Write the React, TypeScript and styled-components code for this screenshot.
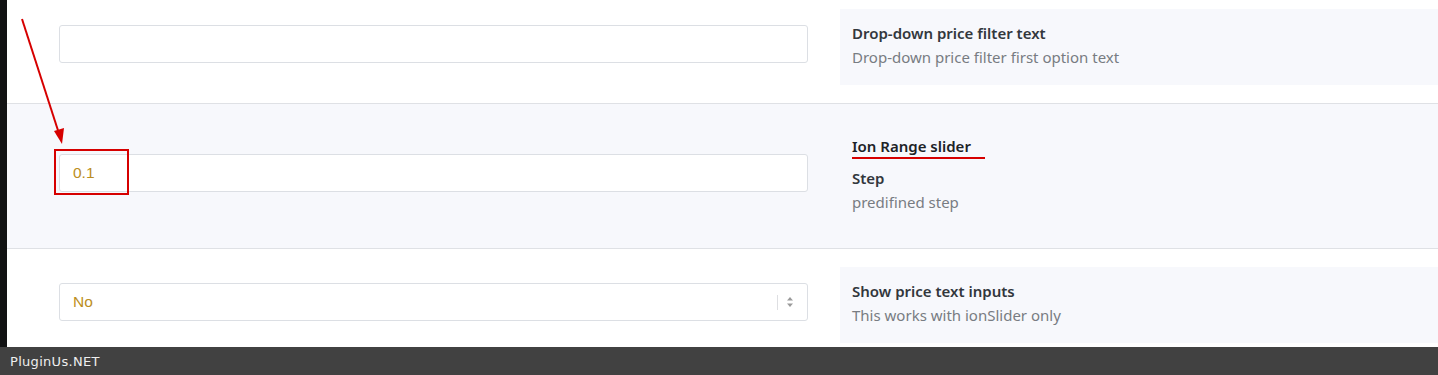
import React from "react";
import styled, { createGlobalStyle } from "styled-components";

const Global = createGlobalStyle`
  html, body { margin: 0; padding: 0; background: #fff; }
  body { font-family: "Noto Sans", "Open Sans", sans-serif; }
  * { box-sizing: border-box; }
`;

const Page = styled.div`
  position: relative;
  width: 1438px;
  height: 375px;
  overflow: hidden;
  display: flex;
  flex-direction: column;
`;

const Body = styled.div`
  flex: 1;
  display: flex;
  min-height: 0;
`;

const Strip = styled.div`
  width: 7px;
  flex: none;
  background: #111213;
`;

const Rows = styled.div`
  flex: 1;
  display: flex;
  flex-direction: column;
`;

const Row = styled.div<{ $h: number; $alt?: boolean; $last?: boolean; $pt: number; $inputTop: number }>`
  height: ${(p) => p.$h}px;
  flex: none;
  display: grid;
  grid-template-columns: 749px 1fr;
  column-gap: 32px;
  align-items: start;
  padding: ${(p) => p.$pt}px 0 0 52px;
  background: ${(p) => (p.$alt ? "#f7f8fc" : "#fff")};
  border-bottom: ${(p) => (p.$last ? "none" : "1px solid #dfe1e5")};
  & > :first-child { margin-top: ${(p) => p.$inputTop}px; }
`;

const Field = styled.div`
  height: 38px;
  border: 1px solid #dcdfe4;
  border-radius: 3px;
  background: #fff;
  display: flex;
  align-items: center;
  padding: 0 13px;
  font-family: "Liberation Sans", Arial, sans-serif;
  font-size: 15.5px;
  color: #bb8e22;
  position: relative;
`;

const SelectArrows = styled.div`
  margin-left: auto;
  display: flex;
  align-items: center;
  gap: 8px;
  height: 100%;
`;

const Divider = styled.span`
  width: 1px;
  height: 15px;
  background: #dedfe2;
`;

const Info = styled.div`
  background: #f7f8fc;
  padding: 14px 12px 18px;
  min-height: 76px;
`;

const Title = styled.div`
  font-size: 15px;
  font-weight: 600;
  color: #32373c;
  line-height: 20px;
  margin-bottom: 4px;
`;

const Section = styled.div`
  position: relative;
  display: inline-block;
  font-size: 15px;
  font-weight: 600;
  color: #1d2327;
  line-height: 20px;
  margin-bottom: 12px;
`;

const Underline = styled.span`
  position: absolute;
  left: 0;
  right: -14px;
  bottom: -3px;
  height: 2px;
  background: #d60000;
`;

const Desc = styled.div`
  font-size: 15px;
  color: #787c82;
  line-height: 20px;
`;

const Footer = styled.div`
  height: 28px;
  flex: none;
  background: #414141;
  display: flex;
  align-items: center;
  padding-left: 10px;
  font-family: "DejaVu Sans", sans-serif;
  font-size: 13px;
  letter-spacing: 0.3px;
  color: #eeeeee;
`;

const Overlay = styled.svg`
  position: absolute;
  left: 0;
  top: 0;
  pointer-events: none;
`;

export default function App() {
  return (
    <Page>
      <Global />
      <Body>
        <Strip />
        <Rows>
          <Row $h={104} $pt={9} $inputTop={16}>
            <Field />
            <Info>
              <Title>Drop-down price filter text</Title>
              <Desc>Drop-down price filter first option text</Desc>
            </Info>
          </Row>
          <Row $h={145} $alt $pt={17} $inputTop={33}>
            <Field>0.1</Field>
            <Info>
              <Section>
                Ion Range slider
                <Underline />
              </Section>
              <Title>Step</Title>
              <Desc>predifined step</Desc>
            </Info>
          </Row>
          <Row $h={98} $last $pt={18} $inputTop={16}>
            <Field>
              No
              <SelectArrows>
                <Divider />
                <svg width="8" height="12" viewBox="0 0 8 12">
                  <path d="M4 1 L7 4.5 L1 4.5 Z" fill="#9a9a9a" />
                  <path d="M4 11 L7 7.5 L1 7.5 Z" fill="#9a9a9a" />
                </svg>
              </SelectArrows>
            </Field>
            <Info>
              <Title>Show price text inputs</Title>
              <Desc>This works with ionSlider only</Desc>
            </Info>
          </Row>
        </Rows>
      </Body>
      <Footer>PluginUs.NET</Footer>
      <Overlay width="200" height="220">
        <line x1="22" y1="19" x2="58.5" y2="132" stroke="#d60000" strokeWidth="2" />
        <path d="M62 144 L54 131 L64 128 Z" fill="#d60000" />
        <rect x="55" y="150" width="73" height="44" fill="none" stroke="#d60000" strokeWidth="2" />
      </Overlay>
    </Page>
  );
}
